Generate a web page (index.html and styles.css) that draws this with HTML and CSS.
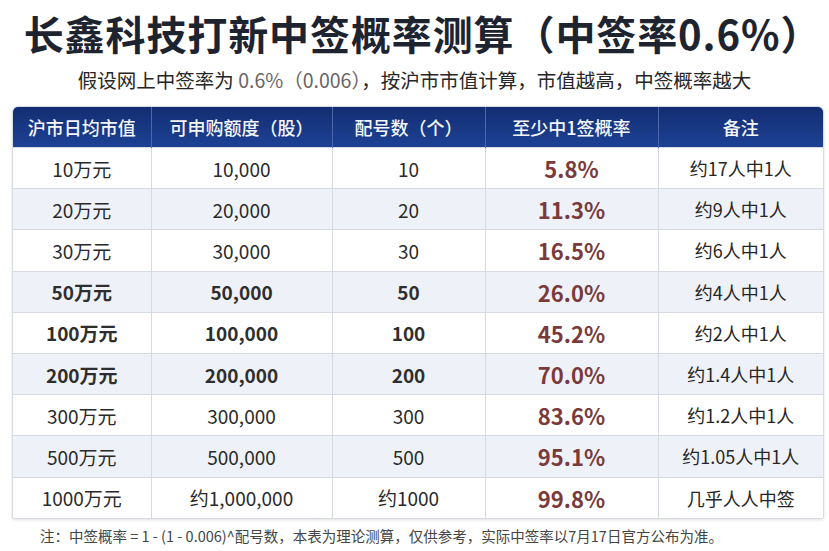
FILE: index.html
```html
<!DOCTYPE html>
<html lang="zh-CN">
<head>
<meta charset="utf-8">
<title>长鑫科技打新中签概率测算</title>
<link rel="stylesheet" href="styles.css">
</head>
<body>
<div class="page">
  <h1 class="title">长鑫科技打新中签概率测算（中签率0.6%）</h1>
  <p class="subtitle">假设网上中签率为 <span class="muted">0.6%（0.006）</span>，按沪市市值计算，市值越高，中签概率越大</p>
  <div class="table-wrap">
    <table class="grid">
      <colgroup>
        <col class="c1"><col class="c2"><col class="c3"><col class="c4"><col class="c5">
      </colgroup>
      <thead>
        <tr><th>沪市日均市值</th><th>可申购额度（股）</th><th>配号数（个）</th><th>至少中1签概率</th><th>备注</th></tr>
      </thead>
      <tbody>
        <tr><td>10万元</td><td>10,000</td><td>10</td><td class="prob">5.8%</td><td class="rem">约17人中1人</td></tr>
        <tr><td>20万元</td><td>20,000</td><td>20</td><td class="prob">11.3%</td><td class="rem">约9人中1人</td></tr>
        <tr><td>30万元</td><td>30,000</td><td>30</td><td class="prob">16.5%</td><td class="rem">约6人中1人</td></tr>
        <tr class="strong"><td>50万元</td><td>50,000</td><td>50</td><td class="prob">26.0%</td><td class="rem">约4人中1人</td></tr>
        <tr class="strong"><td>100万元</td><td>100,000</td><td>100</td><td class="prob">45.2%</td><td class="rem">约2人中1人</td></tr>
        <tr class="strong"><td>200万元</td><td>200,000</td><td>200</td><td class="prob">70.0%</td><td class="rem">约1.4人中1人</td></tr>
        <tr><td>300万元</td><td>300,000</td><td>300</td><td class="prob">83.6%</td><td class="rem">约1.2人中1人</td></tr>
        <tr><td>500万元</td><td>500,000</td><td>500</td><td class="prob">95.1%</td><td class="rem">约1.05人中1人</td></tr>
        <tr><td>1000万元</td><td>约1,000,000</td><td>约1000</td><td class="prob">99.8%</td><td class="rem">几乎人人中签</td></tr>
      </tbody>
    </table>
  </div>
  <p class="note">注：中签概率 = 1 - (1 - 0.006)^配号数，本表为理论测算，仅供参考，实际中签率以7月17日官方公布为准。</p>
</div>
</body>
</html>
```
FILE: styles.css
```css
html, body {
  margin: 0;
  padding: 0;
  background: #ffffff;
}

.page {
  width: 829px;
  height: 551px;
  overflow: hidden;
  font-family: "Noto Sans CJK SC", "Noto Sans", sans-serif;
  color: #222;
}

.title {
  margin: 10px 0 0 16px;
  font-size: 40px;
  line-height: 46px;
  font-weight: 700;
  color: #1e2330;
  text-align: center;
  letter-spacing: 0.9px;
}

.subtitle {
  margin: 12px 0 0 0;
  font-size: 19.5px;
  line-height: 24px;
  color: #262626;
  text-align: center;
}

.muted {
  color: #6a6466;
}

.table-wrap {
  margin: 14px 0 0 12px;
  width: 810px;
  border-radius: 6px 6px 2px 2px;
  overflow: hidden;
  border: 1px solid #d7dbe2;
  box-shadow: 0 1px 3px rgba(0, 0, 0, 0.12);
}

.grid {
  width: 810px;
  border-collapse: collapse;
  table-layout: fixed;
}

.c1 { width: 138px; }
.c2 { width: 181px; }
.c3 { width: 153px; }
.c4 { width: 173px; }
.c5 { width: 165px; }

.grid th {
  height: 40px;
  padding: 0;
  background: linear-gradient(#132d72, #1d4194);
  color: #f4f6fb;
  font-size: 18px;
  font-weight: 500;
  text-align: center;
  border-left: 1px solid #4d67ad;
}

.grid th:first-child {
  border-left: none;
}

.grid td {
  height: 40.2px;
  padding: 0;
  text-align: center;
  font-size: 19px;
  color: #2a2a2a;
  border: 1px solid #d5d9e1;
}

.grid td:first-child {
  border-left: none;
}

.grid td:last-child {
  border-right: none;
}

.grid tbody tr:nth-child(even) td {
  background: #eef2f8;
}

.grid tbody tr:last-child td {
  border-bottom: none;
}

.grid tr.strong td {
  font-weight: 700;
  color: #2e2e2e;
}

.grid tr td.prob {
  font-size: 22px;
  font-weight: 700;
  color: #7a3a3c;
}

.grid tr td.rem {
  font-size: 18px;
  font-weight: 400;
  color: #262626;
}

.note {
  margin: 7px 0 0 40px;
  font-size: 14.5px;
  line-height: 20px;
  color: #444;
}
```
